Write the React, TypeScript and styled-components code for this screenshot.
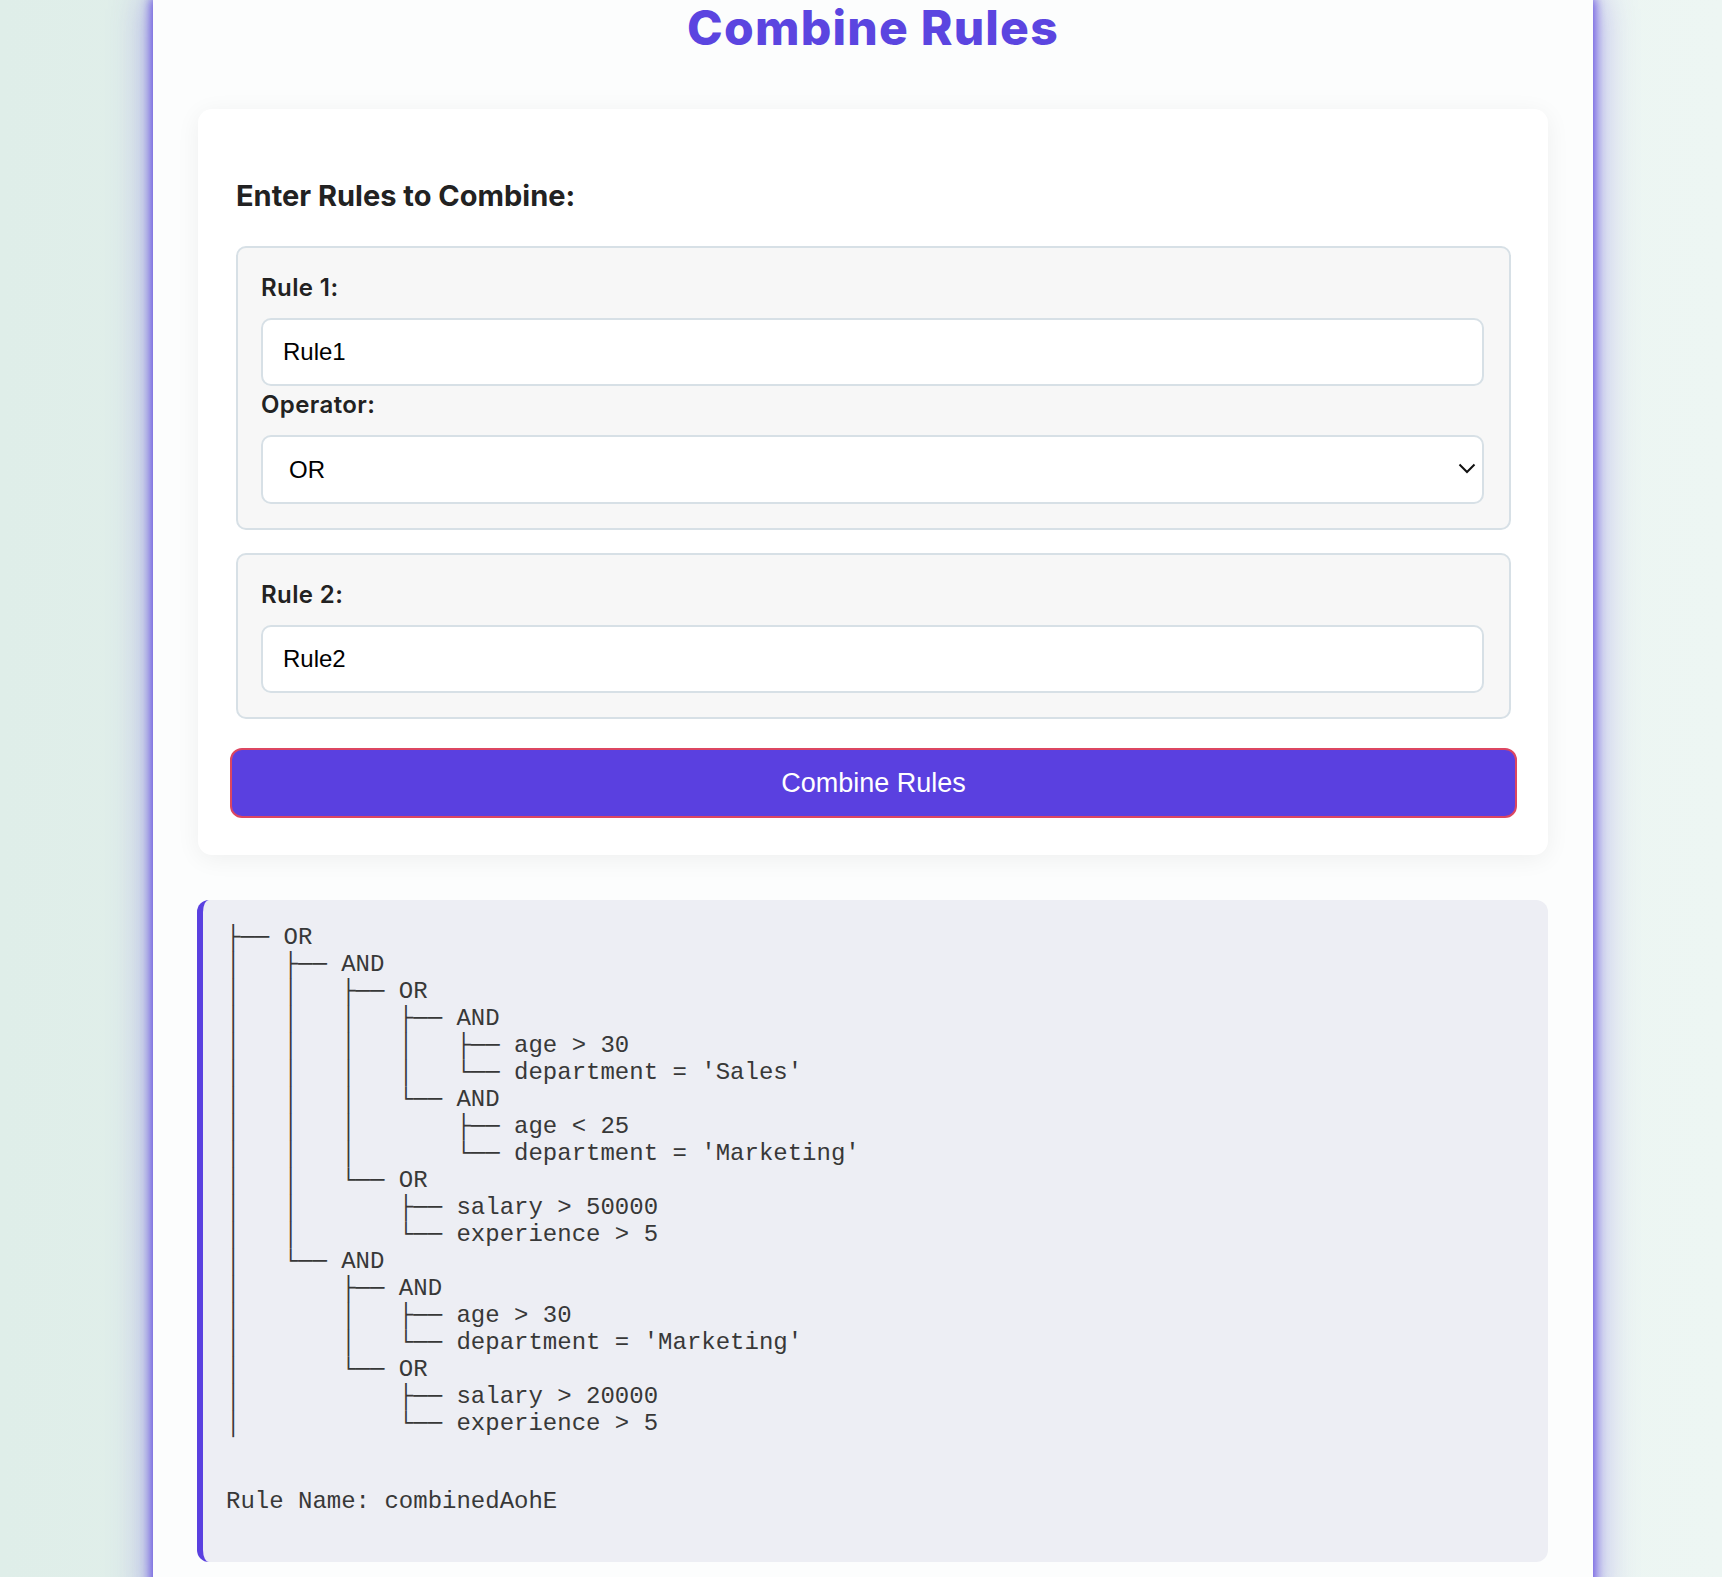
import styled, { createGlobalStyle } from "styled-components";

const GlobalStyle = createGlobalStyle`
  html, body {
    margin: 0;
    padding: 0;
  }
  body {
    min-height: 100vh;
    background: linear-gradient(90deg, #dfeee9 0%, #e7f2ee 50%, #edf6f3 100%);
    font-family: Inter, "Noto Sans", sans-serif;
  }
`;

const TREE = [
    "├── OR",
    "│   ├── AND",
    "│   │   ├── OR",
    "│   │   │   ├── AND",
    "│   │   │   │   ├── age > 30",
    "│   │   │   │   └── department = 'Sales'",
    "│   │   │   └── AND",
    "│   │   │       ├── age < 25",
    "│   │   │       └── department = 'Marketing'",
    "│   │   └── OR",
    "│   │       ├── salary > 50000",
    "│   │       └── experience > 5",
    "│   └── AND",
    "│       ├── AND",
    "│       │   ├── age > 30",
    "│       │   └── department = 'Marketing'",
    "│       └── OR",
    "│           ├── salary > 20000",
    "│           └── experience > 5",
];

export default function App() {
    return (
        <>
            <GlobalStyle />
            <Page>
                <Title>Combine Rules</Title>
                <Card>
                    <Heading>Enter Rules to Combine:</Heading>

                    <RuleGroup>
                        <Label>Rule 1:</Label>
                        <TextInput type="text" defaultValue="Rule1" />
                        <Label $spaced>Operator:</Label>
                        <SelectWrap>
                            <Select defaultValue="OR">
                                <option value="AND">AND</option>
                                <option value="OR">OR</option>
                            </Select>
                            <Chevron viewBox="0 0 18 11" aria-hidden="true">
                                <path d="M1.5 1.5 L9 9 L16.5 1.5" />
                            </Chevron>
                        </SelectWrap>
                    </RuleGroup>

                    <RuleGroup>
                        <Label>Rule 2:</Label>
                        <TextInput type="text" defaultValue="Rule2" />
                    </RuleGroup>

                    <CombineButton type="button">Combine Rules</CombineButton>
                </Card>

                <Output>
                    <Tree>{TREE.join("\n")}</Tree>
                    <RuleName>Rule Name: combinedAohE</RuleName>
                </Output>
            </Page>
        </>
    );
}

const Page = styled.div`
    box-sizing: border-box;
    width: 1440px;
    min-height: 1577px;
    margin-left: 153px;
    padding: 4px 45px 40px;
    background: #fcfdfd;
    box-shadow:
        0 0 10px 2px rgba(91, 67, 224, 0.9),
        0 0 36px 4px rgba(91, 67, 224, 0.45);
`;

const Title = styled.h1`
    margin: 0 0 58px;
    text-align: center;
    font-family: Inter, sans-serif;
    font-weight: 800;
    font-size: 48px;
    line-height: 47px;
    letter-spacing: 1.2px;
    color: #5b45e0;
`;

const Card = styled.section`
    padding: 70px 37px 37px 38px;
    background: #ffffff;
    border-radius: 14px;
    box-shadow: 0 4px 24px rgba(0, 0, 0, 0.06);
`;

const Heading = styled.h2`
    margin: 0 0 33px;
    font-family: Inter, sans-serif;
    font-weight: 700;
    font-size: 29px;
    line-height: 34px;
    color: #222222;
`;

const RuleGroup = styled.div`
    padding: 26px 25px 24px 23px;
    background: #f7f7f7;
    border: 2px solid #d7e0e6;
    border-radius: 10px;

    & + & {
        margin-top: 23px;
    }
`;

const Label = styled.label<{ $spaced?: boolean }>`
    display: block;
    margin: ${(p) => (p.$spaced ? "5px" : "0")} 0 16px;
    font-family: Inter, sans-serif;
    font-weight: 600;
    font-size: 24px;
    line-height: 28px;
    letter-spacing: 0.4px;
    color: #222222;
`;

const fieldBase = `
    box-sizing: border-box;
    display: block;
    width: 100%;
    margin: 0;
    background: #ffffff;
    border: 2px solid #d7e0e6;
    border-radius: 10px;
    font-family: "Liberation Sans", Arial, sans-serif;
    font-size: 24px;
    color: #000000;
    outline: none;
`;

const TextInput = styled.input`
    ${fieldBase}
    height: 68px;
    padding: 0 20px;
`;

const SelectWrap = styled.div`
    position: relative;
`;

const Select = styled.select`
    ${fieldBase}
    height: 69px;
    padding: 0 26px;
    appearance: none;
    -webkit-appearance: none;
`;

const Chevron = styled.svg`
    position: absolute;
    right: 8px;
    top: 28px;
    width: 18px;
    height: 11px;
    fill: none;
    stroke: #111111;
    stroke-width: 2;
    pointer-events: none;
`;

const CombineButton = styled.button`
    box-sizing: border-box;
    display: block;
    width: calc(100% + 12px);
    height: 70px;
    margin: 29px -6px 0 -6px;
    background: #5a40e0;
    border: 2px solid #dc4661;
    border-radius: 12px;
    font-family: "Liberation Sans", Arial, sans-serif;
    font-size: 27px;
    color: #ffffff;
    cursor: pointer;
`;

const Output = styled.div`
    margin: 45px 0 0 -1px;
    padding: 24px 23px 47px;
    background: #edeef4;
    border-left: 6px solid #5a40e0;
    border-radius: 12px;
    font-family: "Liberation Mono", "Courier New", monospace;
    font-size: 24px;
    line-height: 27px;
    color: #383838;
`;

const Tree = styled.pre`
    margin: 0;
    font: inherit;
    white-space: pre;
`;

const RuleName = styled.p`
    margin: 51px 0 0;
`;
